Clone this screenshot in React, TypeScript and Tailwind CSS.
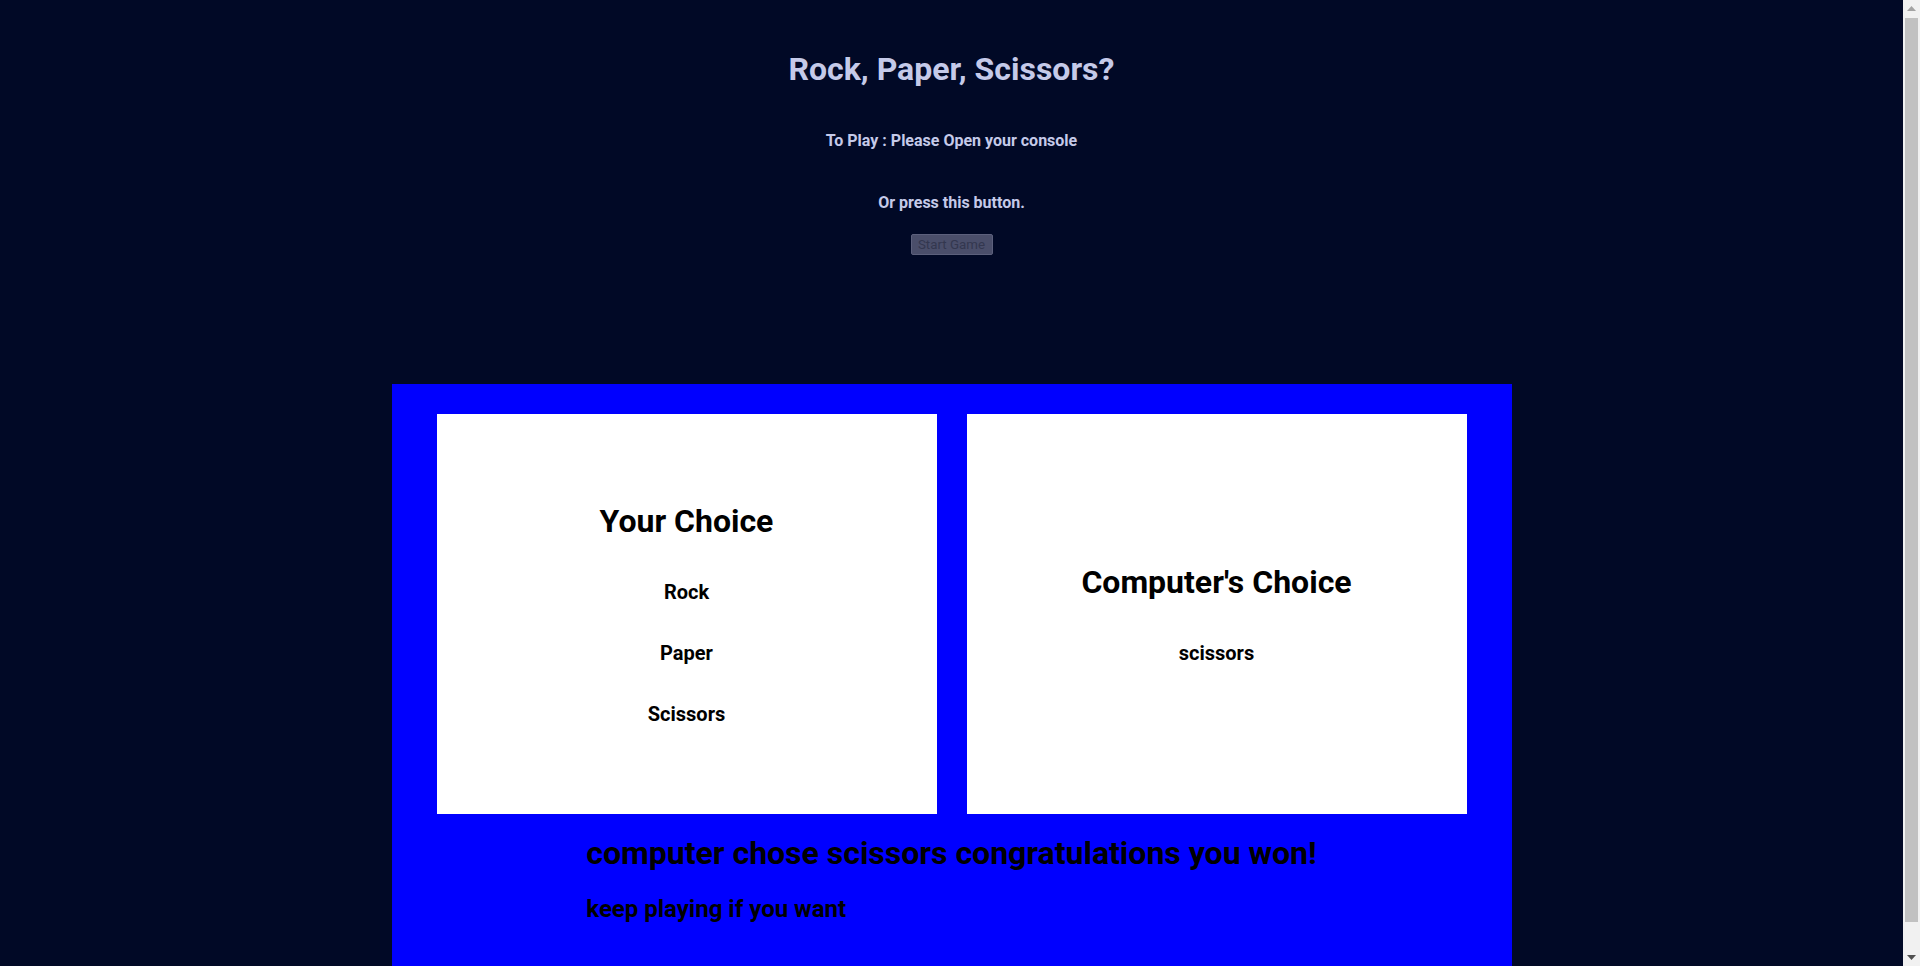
const ScrollBar = () => (
  <div className="flex h-screen w-[17px] shrink-0 flex-col items-center bg-[#f1f1f1]">
    <div className="flex h-[17px] w-full items-center justify-center">
      <svg width="9" height="5" viewBox="0 0 9 5">
        <path d="M0 5 L4.5 0 L9 5 Z" fill="#a3a3a3" />
      </svg>
    </div>
    <div className="mt-[1px] h-[904px] w-[13px] bg-[#c1c1c1]" />
    <div className="flex flex-1 items-end justify-center pb-[6px]">
      <svg width="9" height="5" viewBox="0 0 9 5">
        <path d="M0 0 L4.5 5 L9 0 Z" fill="#505050" />
      </svg>
    </div>
  </div>
);

export default function App() {
  return (
    <div className="flex h-screen overflow-hidden bg-[#010926] font-['Roboto','Liberation_Sans',sans-serif]">
      <main className="min-w-0 flex-1 text-[#c5cae9]">
        <div className="flex flex-col items-center">
          <h1 className="mt-[50px] text-[32px] font-bold leading-[normal]">Rock, Paper, Scissors?</h1>
          <h4 className="mt-[43px] text-base font-bold leading-[normal]">To Play : Please Open your console</h4>
          <h4 className="mt-[43px] text-base font-bold leading-[normal]">Or press this button.</h4>
          <button
            disabled
            className="mt-[22px] flex h-[21px] w-[82px] items-center justify-center rounded-[2px] border border-[#5c607c] bg-[#4a4e6a] text-[13.33px] leading-none text-[#33374f]"
          >
            Start Game
          </button>
        </div>

        <div className="mx-auto mt-[129px] w-[1120px] bg-[#0000ff] px-[45px] pt-[30px] pb-[72px] text-black">
          <div className="flex gap-[30px]">
            <div className="flex h-[400px] w-[500px] flex-col items-center justify-center bg-white">
              <h2 className="text-[32px] font-bold leading-[normal]">Your Choice</h2>
              <h3 className="mt-[40px] text-[20px] font-bold leading-[normal]">Rock</h3>
              <h3 className="mt-[37px] text-[20px] font-bold leading-[normal]">Paper</h3>
              <h3 className="mt-[37px] text-[20px] font-bold leading-[normal]">Scissors</h3>
            </div>
            <div className="flex h-[400px] w-[500px] flex-col items-center justify-center bg-white">
              <h2 className="text-[32px] font-bold leading-[normal]">Computer's Choice</h2>
              <h3 className="mt-[40px] text-[20px] font-bold leading-[normal]">scissors</h3>
            </div>
          </div>
          <div className="mx-auto w-fit">
            <h1 className="mt-[20px] text-[32px] font-bold leading-[normal]">
              computer chose scissors congratulations you won!
            </h1>
            <h2 className="mt-[23px] text-[24px] font-bold leading-[normal]">keep playing if you want</h2>
          </div>
        </div>
      </main>
      <ScrollBar />
    </div>
  );
}
